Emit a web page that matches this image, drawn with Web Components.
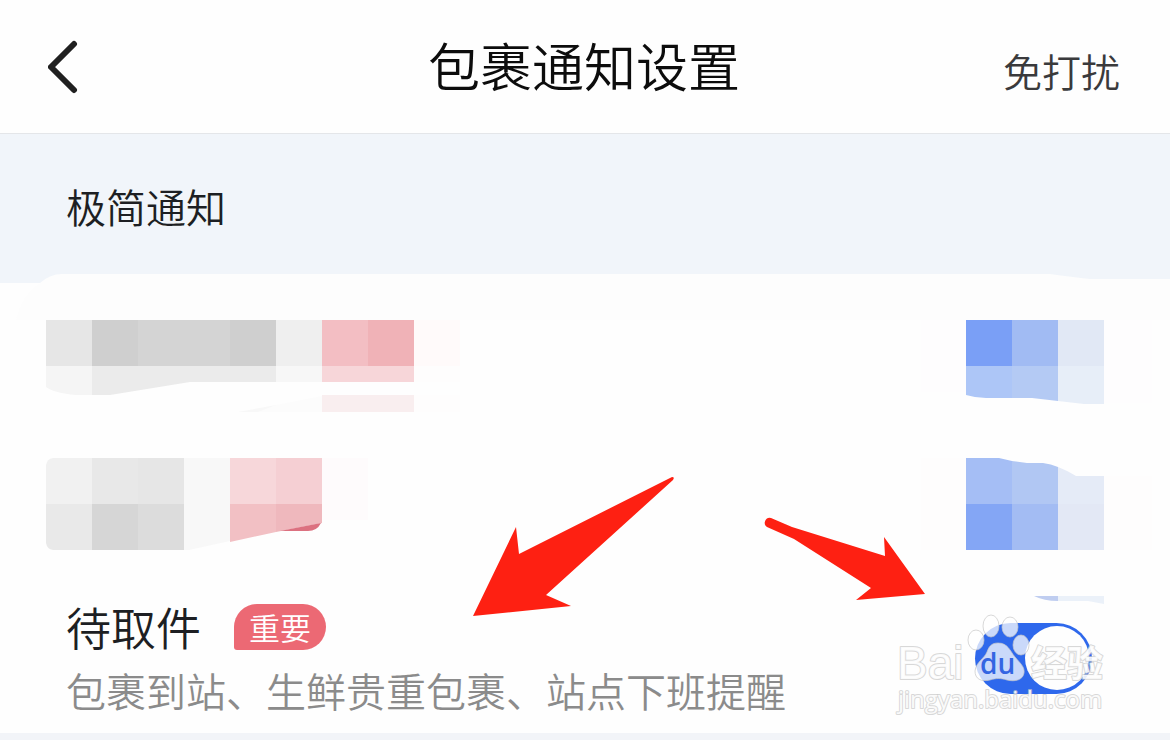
<!DOCTYPE html>
<html lang="zh-CN">
<head>
<meta charset="utf-8">
<meta name="viewport" content="width=device-width, initial-scale=1">
<title>包裹通知设置</title>
<style>
  html, body { margin: 0; min-height: 100%; background: #f2f4f8; }
  body { font-family: "Noto Sans CJK SC", "Noto Sans", sans-serif; font-weight: 350; color: #1d1f23; overflow: hidden; }
</style>
</head>
<body>
<notice-page></notice-page>

<template id="t-page">
  <style>
    :host { display: block; position: relative; }
    main { display: block; }
  </style>
  <page-header heading="包裹通知设置" action="免打扰"></page-header>
  <main>
    <section-band>极简通知</section-band>
    <notice-sheet>
      <masked-row>
        <svg slot="start" width="414" height="92" viewBox="0 0 414 92" aria-hidden="true">
          <path fill="#e6e6e6" d="M0 0h46v46H0z"/>
          <path fill="#cfcfcf" d="M46 0h46v46H46z"/>
          <path fill="#d4d4d4" d="M92 0h92v46H92z"/>
          <path fill="#cfcfcf" d="M184 0h46v46h-46z"/>
          <path fill="#efefef" d="M230 0h46v46h-46z"/>
          <path fill="#f3bec3" d="M276 0h46v46h-46z"/>
          <path fill="#f0b2b7" d="M322 0h46v46h-46z"/>
          <path fill="#fffafa" d="M368 0h46v46h-46z"/>
          <path fill="#f5f5f5" d="M0 46h46v29H30Q8 73 0 67z"/>
          <path fill="#ebebeb" d="M46 46h184v16h-86L64 75H46z"/>
          <path fill="#f7f7f7" d="M230 46h46v16h-46z"/>
          <path fill="#f7d6d9" d="M276 46h92v16h-92z"/>
          <path fill="#fefdfd" d="M368 46h46v16h-46z"/>
          <path fill="#f8f8f8" d="M192 92l38-7v4l-18 3z"/>
          <path fill="#fcfcfc" d="M212 92l18-7 46-9v16z"/>
          <path fill="#f9eeef" d="M276 75h92v17h-92z"/>
          <path fill="#fefdfd" d="M368 75h46v17h-46z"/>
        </svg>
        <svg slot="end" width="138" height="92" viewBox="0 0 138 92" aria-hidden="true">
          <path fill="#7a9ff6" d="M0 0h46v46H0z"/>
          <path fill="#a1bbf3" d="M46 0h46v46H46z"/>
          <path fill="#e1e8f5" d="M92 0h46v46H92z"/>
          <path fill="#adc6f7" d="M0 46h46v32H20Q10 78 0 75z"/>
          <path fill="#b4caf4" d="M46 46h46v35L66 78H46z"/>
          <path fill="#e7eef8" d="M92 46h46v38h-20L92 81z"/>
          <path fill="#fefdfe" d="M138 0h48v83h-48zM-45 0H0v72h-45z"/>
        </svg>
      </masked-row>
      <masked-row>
        <svg slot="start" width="414" height="92" viewBox="0 0 414 92" aria-hidden="true">
          <path fill="#f1f1f1" d="M7 0h39v46H0V7Q1 1 7 0z"/>
          <path fill="#e8e8e8" d="M46 0h46v46H46z"/>
          <path fill="#e6e6e6" d="M92 0h46v46H92z"/>
          <path fill="#f8f8f8" d="M138 0h46v83l-41 9h-5z"/>
          <path fill="#f7d7da" d="M184 0h46v46h-46z"/>
          <path fill="#f5cfd3" d="M230 0h46v46h-46z"/>
          <path fill="#fefbfc" d="M276 0h46v62h-46z"/>
          <path fill="#e9e9e9" d="M0 46h46v46H7Q1 91 0 85z"/>
          <path fill="#d6d6d6" d="M46 46h46v46H46z"/>
          <path fill="#dcdcdc" d="M92 46h46v46H92z"/>
          <path fill="#f2c0c4" d="M184 46h46v28l-46 10z"/>
          <path fill="#efb8bd" d="M230 46h46v19l-46 9z"/>
          <path fill="#dc7180" d="M234 73l41-8q-4 8-13 8z"/>
        </svg>
        <svg slot="end" width="138" height="92" viewBox="0 0 138 92" aria-hidden="true">
          <path fill="#a5bef5" d="M0 0h33l13 3v43H0z"/>
          <path fill="#b1c7f3" d="M46 3l15 2h16q8 1 15 4v37H46z"/>
          <path fill="#e5ebf7" d="M92 9q8 3 18 9h28v28H92z"/>
          <path fill="#84a6f5" d="M0 46h46v46H0z"/>
          <path fill="#a3bcf3" d="M46 46h46v46H46z"/>
          <path fill="#e3e8f5" d="M92 46h46v46H92z"/>
          <path fill="#fefdfd" d="M138 18h48v74h-48zM-45 0H0v92h-45z"/>
          <path fill="#bfcdf0" d="M68 138h24v5q-14 0-24-5z"/>
          <path fill="#ebf1f9" d="M92 138h46v8l-16-3H92z"/>
        </svg>
      </masked-row>
      <notice-item label="待取件" tag="重要">包裹到站、生鲜贵重包裹、站点下班提醒</notice-item>
    </notice-sheet>
  </main>
  <pointer-arrows></pointer-arrows>
  <site-mark></site-mark>
</template>

<template id="t-header">
  <style>
    :host { display: block; background: #fefefe; border-bottom: 1px solid #e4e6e9; }
    header { display: grid; grid-template-columns: 1fr auto 1fr; align-items: baseline; padding: 27px 50px 30px 48px; }
    button { border: 0; padding: 0; background: none; font: inherit; color: #3a3a3c; cursor: pointer; }
    .back { align-self: center; justify-self: start; display: block; padding-top: 3px; }
    .back svg { display: block; }
    h1 { margin: 0; font-size: 52px; line-height: 76px; font-weight: 350; color: #0c0c0c; }
    .act { justify-self: end; font-size: 39px; line-height: 56px; }
  </style>
  <header>
    <button class="back" type="button" aria-label="返回">
      <svg width="30" height="54" viewBox="0 0 30 54" fill="none" stroke="#202020" stroke-width="6" stroke-linecap="round" stroke-linejoin="round"><path d="M26 4L3 27l23 23"/></svg>
    </button>
    <h1></h1>
    <button class="act" type="button"></button>
  </header>
</template>

<template id="t-band">
  <style>
    :host { display: block; background: #f1f5fa; padding: 44px 66px 49px; }
    h2 { margin: 0; font-size: 40px; line-height: 56px; font-weight: 350; }
  </style>
  <h2><slot></slot></h2>
</template>

<template id="t-sheet">
  <style>
    :host { display: block; position: relative; background: #fefefe; padding-top: 37px; }
    .cap { position: absolute; top: -9px; left: 0; width: 100%; height: 46px; }
    .rows { position: relative; display: grid; gap: 46px; }
  </style>
  <svg class="cap" viewBox="0 0 1170 46" preserveAspectRatio="none" aria-hidden="true"><path fill="#fdfdfd" d="M16 46Q22 20 40 9 50 0 62 0H1050Q1072 3 1090 5H1170V46z"/></svg>
  <div class="rows"><slot></slot></div>
</template>

<template id="t-masked">
  <style>
    :host { display: flex; justify-content: space-between; padding: 0 66px 0 46px; }
    ::slotted(svg) { display: block; overflow: visible; flex: none; }
  </style>
  <slot name="start"></slot>
  <slot name="end"></slot>
</template>

<template id="t-item">
  <style>
    :host { display: flex; align-items: center; justify-content: space-between; padding: 4px 78px 19px 66px; }
    .text { display: grid; gap: 12px; }
    .head { display: flex; align-items: center; gap: 33px; height: 54px; }
    label { font-size: 45px; line-height: 54px; }
    .tag { font-size: 31px; line-height: 46px; padding: 0 15px; color: #fff; background: #ec6974; border-radius: 23px 23px 23px 3px; }
    p { margin: 0; font-size: 40px; line-height: 48px; color: #8b8b8b; white-space: nowrap; }
    toggle-switch { padding-top: 2px; }
  </style>
  <div class="text">
    <div class="head"><label for="sw"></label><span class="tag"></span></div>
    <p><slot></slot></p>
  </div>
  <toggle-switch></toggle-switch>
</template>

<template id="t-switch">
  <style>
    :host { display: block; flex: none; }
    input { appearance: none; display: flex; justify-content: flex-start; align-items: center; box-sizing: border-box; margin: 0; width: 117px; height: 71px; padding: 3px; border-radius: 36px; background: #c9ccd3; cursor: pointer; }
    input::before { content: ""; width: 64px; height: 64px; border-radius: 50%; background: #fefefe; }
    input:checked { background: #2e68ec; justify-content: flex-end; }
  </style>
  <input type="checkbox" role="switch" checked>
</template>

<template id="t-arrows">
  <style>
    :host { position: absolute; top: 470px; left: 40%; pointer-events: none; }
    svg { display: block; }
  </style>
  <svg width="462" height="150" viewBox="468 470 462 150" fill="#fe2012" aria-hidden="true">
    <path d="M672 477L519 554 516 527 473 616 571 606 546 595 673 480Q675 477 672 477z"/>
    <path d="M771 518L792 527 885 556 884 537 925 594 856 600 871 588 794 539 767 527A5 5 0 0 1 771 518z"/>
  </svg>
</template>

<template id="t-mark">
  <style>
    :host { position: absolute; top: 610px; right: 60px; pointer-events: none; }
    svg { display: block; }
    text { paint-order: stroke; stroke: #c8c8c8; stroke-opacity: .7; stroke-width: 2px; stroke-linejoin: round; fill: #fff; fill-opacity: .9; font-family: "Liberation Sans", sans-serif; }
    .big { font-size: 46px; font-weight: 400; }
    .cn { font-family: "Noto Sans CJK SC", sans-serif; font-size: 36px; font-weight: 700; }
    .url { font-family: "Open Sans", sans-serif; font-size: 24px; font-weight: 400; stroke-opacity: .7; }
    .du { font-family: "Open Sans", sans-serif; font-size: 28px; font-weight: 600; fill: #3465e2; fill-opacity: 1; stroke: none; }
    .paw { fill: #fff; fill-opacity: .75; stroke: #c8c8c8; stroke-opacity: .7; stroke-width: 1; }
  </style>
  <svg width="216" height="108" viewBox="894 610 216 108">
    <g class="paw">
      <ellipse cx="976" cy="640" rx="8" ry="10"/>
      <ellipse cx="991" cy="626" rx="8" ry="11"/>
      <ellipse cx="1010" cy="627" rx="8" ry="10"/>
      <ellipse cx="1021" cy="645" rx="8" ry="10"/>
      <path d="M998 643C1008 643 1010 651 1015 657 1020 663 1025 667 1024 673 1023 680 1015 682 1007 680 1001 678 996 678 990 680 981 682 975 679 975 671 976 662 984 659 987 652 989 646 992 643 998 643z"/>
    </g>
    <text class="big" x="897" y="679">Bai</text>
    <text class="du" x="980" y="674">du</text>
    <text class="cn" x="1031" y="677">经验</text>
    <text class="url" x="898" y="708">jingyan.baidu.com</text>
  </svg>
</template>

<script>
  class Base extends HTMLElement {
    constructor() {
      super();
      const tpl = document.getElementById(this.constructor.tpl);
      this.attachShadow({ mode: "open" }).append(document.importNode(tpl.content, true));
    }
    fill(selector, attr) {
      this.shadowRoot.querySelector(selector).textContent = this.getAttribute(attr) || "";
    }
  }
  const plain = (name, tpl) => customElements.define(name, class extends Base { static tpl = tpl; });

  customElements.define("page-header", class extends Base {
    static tpl = "t-header";
    connectedCallback() { this.fill("h1", "heading"); this.fill(".act", "action"); }
  });
  customElements.define("toggle-switch", class extends Base {
    static tpl = "t-switch";
    static observedAttributes = ["label"];
    attributeChangedCallback(name, old, value) {
      this.shadowRoot.querySelector("input").setAttribute("aria-label", value);
    }
    toggle() { this.shadowRoot.querySelector("input").click(); }
  });
  customElements.define("notice-item", class extends Base {
    static tpl = "t-item";
    connectedCallback() {
      this.fill("label", "label");
      this.fill(".tag", "tag");
      const sw = this.shadowRoot.querySelector("toggle-switch");
      sw.id = "sw";
      sw.setAttribute("label", this.getAttribute("label"));
      this.shadowRoot.querySelector("label").onclick = () => sw.toggle();
    }
  });
  plain("section-band", "t-band");
  plain("masked-row", "t-masked");
  plain("notice-sheet", "t-sheet");
  plain("pointer-arrows", "t-arrows");
  plain("site-mark", "t-mark");
  plain("notice-page", "t-page");
</script>
</body>
</html>
